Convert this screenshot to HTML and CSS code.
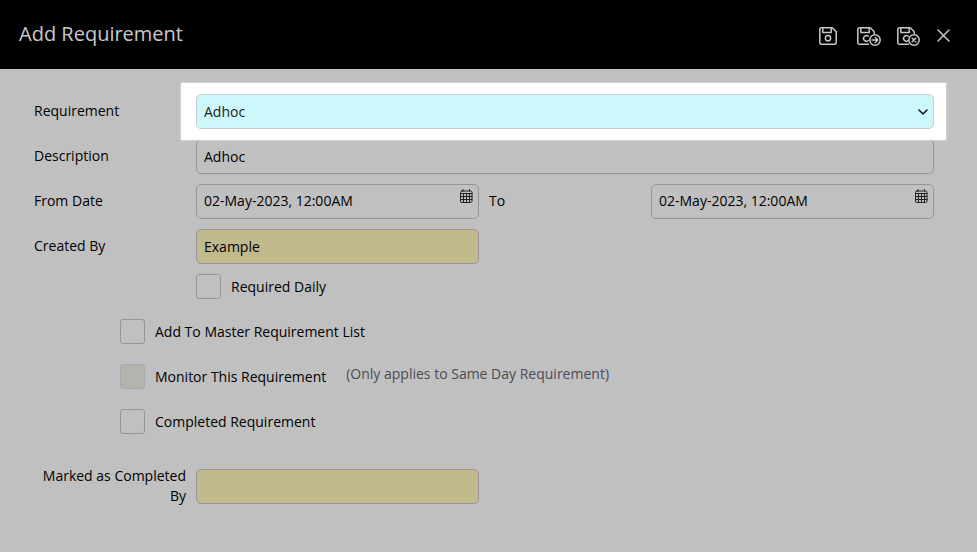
FILE: index.html
```html
<!DOCTYPE html>
<html lang="en">
<head>
<meta charset="utf-8">
<title>Add Requirement</title>
<meta name="viewport" content="width=device-width, initial-scale=1">
<link rel="stylesheet" href="styles.css">
</head>
<body>
<header class="header">
  <h1 class="title">Add Requirement</h1>
  <div class="actions">
    <button class="action" type="button" aria-label="Save">
      <svg width="24" height="20" viewBox="-2 -1 24 20"><path d="M2.5.8h10.8l3.9 4v10.7a1.7 1.7 0 0 1-1.7 1.7h-13a1.7 1.7 0 0 1-1.7-1.7v-13A1.7 1.7 0 0 1 2.5.8zM3.8.8v4.7h8.4V.8"/><circle cx="9" cy="11.2" r="2.6"/></svg>
    </button>
    <button class="action" type="button" aria-label="Save and continue">
      <svg width="24" height="20" viewBox="0 -1 24 20"><path d="M11.5 17.2h-9a1.7 1.7 0 0 1-1.7-1.7v-13A1.7 1.7 0 0 1 2.5.8h10.8l3.9 4v1.7M3.8.8v4.7h8.4V.8M11.2 9.3a2.8 2.8 0 1 0 0 4.2"/><circle cx="18" cy="13" r="5.2"/><path d="M15 13h5.7M18.3 10.5l2.5 2.5-2.5 2.5"/></svg>
    </button>
    <button class="action" type="button" aria-label="Save and close">
      <svg width="24" height="20" viewBox="0 -1 24 20"><path d="M11.5 17.2h-9a1.7 1.7 0 0 1-1.7-1.7v-13A1.7 1.7 0 0 1 2.5.8h10.8l3.9 4v1.7M3.8.8v4.7h8.4V.8M11.2 9.3a2.8 2.8 0 1 0 0 4.2"/><circle cx="17" cy="13" r="5.2"/><path d="M15.2 11.2l3.6 3.6M18.8 11.2l-3.6 3.6"/></svg>
    </button>
    <button class="action" type="button" aria-label="Close">
      <svg width="14" height="14" viewBox="0 0 14 14"><path d="M1 1l11 11M12 1L1 12"/></svg>
    </button>
  </div>
</header>
<main>
  <form class="form">
    <div class="row">
      <label for="requirement">Requirement</label>
      <div class="wide spotlight">
        <select class="field select" id="requirement"><option>Adhoc</option></select>
        <svg class="chevron" width="10" height="7" viewBox="0 0 10 7"><path d="M1 1l4 4 4-4"/></svg>
      </div>
    </div>
    <div class="row">
      <label for="description">Description</label>
      <input class="field wide" id="description" type="text" value="Adhoc">
    </div>
    <div class="row">
      <label for="from">From Date</label>
      <div class="date">
        <input class="field" id="from" type="text" value="02-May-2023, 12:00AM">
        <svg class="calendar" width="14" height="15" viewBox="0 0 14 15"><rect x="1.5" y="2" width="11.5" height="11.5" rx="1.5"/><path d="M1.5 4.5h11.500M1.500 7.500h11.500M1.500 10.500h11.500M4.500 4.500v9M7.500 4.500v9M10.500 4.500v9M4 .5V2M10.500 .5V2"/></svg>
      </div>
      <label for="to">To</label>
      <div class="date">
        <input class="field" id="to" type="text" value="02-May-2023, 12:00AM">
        <svg class="calendar" width="14" height="15" viewBox="0 0 14 15"><rect x="1.5" y="2" width="11.5" height="11.5" rx="1.5"/><path d="M1.5 4.5h11.500M1.500 7.500h11.500M1.500 10.500h11.500M4.500 4.500v9M7.500 4.500v9M10.500 4.500v9M4 .5V2M10.500 .5V2"/></svg>
      </div>
    </div>
    <div class="row">
      <label for="creator">Created By</label>
      <input class="field readonly" id="creator" type="text" value="Example" readonly>
    </div>
    <div class="row">
      <div class="check daily">
        <input class="box" id="daily" type="checkbox">
        <label for="daily">Required Daily</label>
      </div>
    </div>
    <div class="checks">
      <div class="check">
        <input class="box" id="master" type="checkbox">
        <label for="master">Add To Master Requirement List</label>
      </div>
      <div class="check">
        <input class="box" id="monitor" type="checkbox" disabled>
        <label for="monitor">Monitor This Requirement</label>
        <span class="note">(Only applies to Same Day Requirement)</span>
      </div>
      <div class="check">
        <input class="box" id="completed" type="checkbox">
        <label for="completed">Completed Requirement</label>
      </div>
    </div>
    <div class="row">
      <label class="label-end" for="marked">Marked as Completed By</label>
      <input class="field readonly" id="marked" type="text" readonly>
    </div>
  </form>
</main>
</body>
</html>
```
FILE: styles.css
```css
* {
  box-sizing: border-box;
}

body {
  margin: 0;
  background: #c0c0c0;
  color: #000;
  font: 14px/20px "Open Sans", "Noto Sans", sans-serif;
}

.header {
  display: flex;
  align-items: center;
  justify-content: space-between;
  height: 69px;
  padding: 0 26px 0 19px;
  background: #000;
  color: #c8c8c8;
}

.title {
  margin: 0;
  padding-bottom: 1px;
  font-size: 20px;
  font-weight: 400;
  line-height: 28px;
}

.actions {
  display: flex;
  align-items: center;
  gap: 16px;
  padding-top: 3px;
}

.action {
  display: flex;
  padding: 0;
  border: 0;
  background: none;
  color: inherit;
}

svg {
  fill: none;
  stroke: currentColor;
  stroke-width: 1.5;
  stroke-linecap: round;
  stroke-linejoin: round;
}

.form {
  display: flex;
  flex-direction: column;
  gap: 10px;
  padding: 25px 43px 24px 34px;
}

.row {
  display: grid;
  grid-template-columns: 152px minmax(0, 1fr) 152px minmax(0, 1fr);
  align-items: center;
  gap: 10px;
}

.row > label {
  padding-bottom: 1px;
}

.wide {
  grid-column: 2 / -1;
}

.field {
  display: block;
  width: 100%;
  height: 35px;
  padding: 0 7px;
  border: 1px solid #969696;
  border-radius: 5px;
  background: #c0c0c0;
  color: #000;
  font: inherit;
}

.wide.field {
  width: auto;
}

.readonly {
  background: #c0ba8c;
}

.spotlight {
  position: relative;
  z-index: 1;
}

.spotlight::before {
  content: "";
  position: absolute;
  inset: -11px -12px -11px -15px;
  background: #fff;
  box-shadow: 0 0 2px #eee;
}

.select {
  position: relative;
  appearance: none;
  border-color: #c8ccd0;
  background: #ccf7fb;
  color: #222;
}

.chevron {
  position: absolute;
  top: 15px;
  right: 6px;
  color: #111;
  pointer-events: none;
}

.date {
  position: relative;
}

.date .field {
  padding-bottom: 2px;
}

.calendar {
  position: absolute;
  top: 5px;
  right: 6px;
  color: #222;
  stroke-width: 1;
}

.check {
  display: flex;
  align-items: center;
  gap: 10px;
}

.daily {
  grid-column: 2;
}

.box {
  appearance: none;
  width: 25px;
  height: 25px;
  margin: 0;
  border: 1px solid #969696;
  border-radius: 3px;
  background: #c0c0c0;
}

.box:disabled {
  border-color: #aaa;
  background: #b4b4ae;
}

.checks {
  display: flex;
  flex-direction: column;
  gap: 20px;
  padding: 10px 0 22px 86px;
}

.note {
  margin-left: 10px;
  padding-bottom: 5px;
  color: #4c4c54;
}

.label-end {
  text-align: right;
}
```
